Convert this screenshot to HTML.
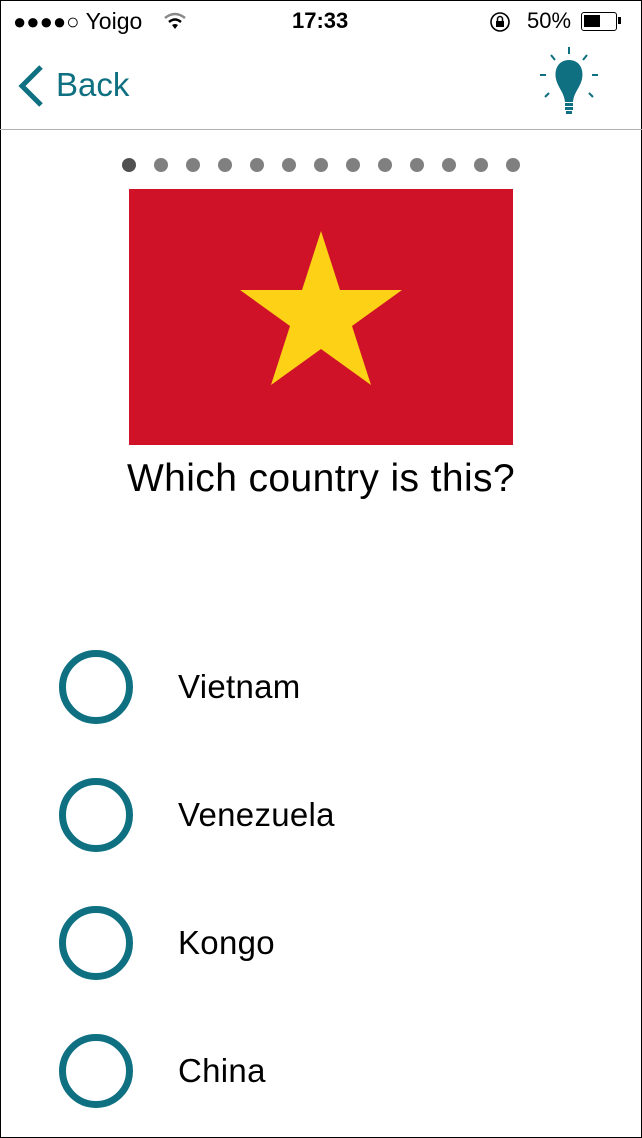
<!DOCTYPE html>
<html><head><style>
html,body{margin:0;padding:0;}
body{width:642px;height:1138px;position:relative;background:#fff;font-family:"Liberation Sans",sans-serif;overflow:hidden;}
.frame{position:absolute;left:0;top:0;width:640px;height:1136px;border:1px solid #000;}
.t{position:absolute;white-space:nowrap;}
.dot{position:absolute;top:158px;width:14px;height:14px;border-radius:50%;background:#808080;}
.c{position:absolute;left:59px;width:60px;height:60px;border:7px solid #0e7080;border-radius:50%;}
.o{position:absolute;left:178px;font-size:33px;color:#000;letter-spacing:0.3px;}
</style></head><body>
<div class="frame"></div>
<div class="t" style="left:13px;top:8px;font-size:22px;">●●●●○ <span style="font-size:23px">Yoigo</span></div>
<svg style="position:absolute;left:163px;top:12px" width="24" height="18" viewBox="0 0 24 18"><path d="M2 6 Q12 -2 22 6" stroke="#888" stroke-width="2.5" fill="none"/><path d="M6 10 Q12 5 18 10" stroke="#000" stroke-width="2.5" fill="none"/><path d="M9 13 L12 17 L15 13 Q12 11 9 13Z" fill="#000"/></svg>
<div class="t" style="left:292px;top:8px;font-size:22px;font-weight:bold;">17:33</div>
<svg style="position:absolute;left:489px;top:11px" width="22" height="22" viewBox="0 0 22 22"><circle cx="11" cy="11" r="9" stroke="#000" stroke-width="1.6" fill="none"/><rect x="7" y="10" width="8" height="6" fill="#000"/><path d="M8.5 10 V8 a2.5 2.5 0 0 1 5 0 V10" stroke="#000" stroke-width="1.5" fill="none"/></svg>
<div class="t" style="left:527px;top:8px;font-size:22px;">50%</div>
<div style="position:absolute;left:581px;top:12px;width:34px;height:17px;border:1.5px solid #000;border-radius:3px;"></div>
<div style="position:absolute;left:584px;top:15px;width:16px;height:12px;background:#000;"></div>
<div style="position:absolute;left:618px;top:17px;width:3px;height:7px;background:#000;"></div>
<svg style="position:absolute;left:16px;top:64px" width="30" height="44" viewBox="0 0 30 44"><path d="M25 3 L6 22 L25 41" stroke="#0e7080" stroke-width="5" fill="none"/></svg>
<div class="t" style="left:56px;top:66px;font-size:33px;color:#0e7080;">Back</div>
<svg style="position:absolute;left:536px;top:44px" width="66" height="76" viewBox="0 0 66 76"><g stroke="#0e7080" stroke-width="2"><path d="M33 3 V10"/><path d="M15 11 L19 16"/><path d="M51 11 L47 16"/><path d="M4 31 H10"/><path d="M56 31 H62"/><path d="M9 53 L13 49"/><path d="M57 53 L53 49"/></g><path d="M33 16 C22 16 18 26 20 35 C22 44 28 48 29 58 H37 C38 48 44 44 46 35 C48 26 44 16 33 16Z" fill="#0e7080"/><rect x="29" y="59" width="8" height="3" fill="#0e7080"/><rect x="29" y="63" width="8" height="3" fill="#0e7080"/><rect x="30" y="67" width="6" height="3" fill="#0e7080"/></svg>
<div style="position:absolute;left:0;top:129px;width:642px;height:1px;background:#b0b0b0;"></div>
<div class="dot" style="left:122px;background:#505050"></div><div class="dot" style="left:154px"></div><div class="dot" style="left:186px"></div><div class="dot" style="left:218px"></div><div class="dot" style="left:250px"></div><div class="dot" style="left:282px"></div><div class="dot" style="left:314px"></div><div class="dot" style="left:346px"></div><div class="dot" style="left:378px"></div><div class="dot" style="left:410px"></div><div class="dot" style="left:442px"></div><div class="dot" style="left:474px"></div><div class="dot" style="left:506px"></div>
<svg style="position:absolute;left:129px;top:189px" width="384" height="256" viewBox="0 0 384 256"><rect width="384" height="256" fill="#cf1228"/><polygon fill="#fcd116" points="192,42 211,101 273,101 223,137 242,196 192,160 142,196 161,137 111,101 173,101"/></svg>
<div class="t" style="left:0;width:642px;text-align:center;top:457px;font-size:39px;letter-spacing:0.4px;">Which country is this?</div>
<div class="c" style="top:650px"></div><div class="o" style="top:668px">Vietnam</div>
<div class="c" style="top:778px"></div><div class="o" style="top:796px">Venezuela</div>
<div class="c" style="top:906px"></div><div class="o" style="top:924px">Kongo</div>
<div class="c" style="top:1034px"></div><div class="o" style="top:1052px">China</div>
</body></html>
